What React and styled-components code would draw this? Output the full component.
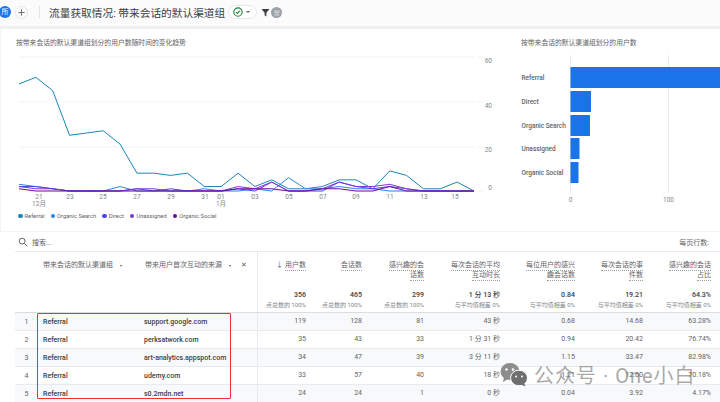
import React from 'react'
import styled, { createGlobalStyle } from 'styled-components'

const GlobalStyle = createGlobalStyle`
    html, body {
        margin: 0;
        background: #fff;
        overflow: hidden;
    }
    body {
        font-family: Roboto, "Noto Sans CJK SC", sans-serif;
        color: #3c4043;
    }
`

const COLUMNS = '23px 106px 113px 49px 56px 62px 76px 75px 68px 68px'

// y = 191 - value * 2.23, x = 18 + day index * 16.85
const SERIES = [
    { name: 'Referral', color: '#1a86b8', data: [48, 51, 45, 25, 26, 27, 21, 8, 8, 7, 8, 2, 2, 8, 2, 5, 1, 1, 2, 5, 5, 1, 9, 7, 1, 1, 4, 0] },
    { name: 'Organic Search', color: '#2a86e8', data: [3, 2, 1, 0, 0, 0, 2, 0, 0, 0, 0, 1, 0, 0, 1, 0, 6, 1, 1, 2, 1, 1, 0, 0, 0, 0, 0, 0] },
    { name: 'Direct', color: '#4a45ea', data: [2, 2, 1, 0, 0, 0, 0, 1, 0, 1, 0, 0, 0, 1, 0, 4, 0, 0, 0, 4, 2, 1, 2, 1, 0, 0, 0, 0] },
    { name: 'Unassigned', color: '#7d36d8', data: [2, 1, 1, 0, 0, 0, 0, 1, 1, 0, 0, 0, 0, 2, 1, 4, 0, 0, 1, 4, 2, 2, 3, 1, 0, 0, 0, 0] },
    { name: 'Organic Social', color: '#6f0a92', data: [1, 0, 0, 0, 0, 0, 0, 0, 0, 0, 0, 0, 0, 1, 1, 1, 0, 0, 1, 1, 0, 0, 2, 0, 0, 0, 0, 0] },
]

const DAY_TICKS = [
    { x: 38, label: '21', sub: '12月' },
    { x: 69, label: '23' },
    { x: 102, label: '25' },
    { x: 136, label: '27' },
    { x: 170, label: '29' },
    { x: 204, label: '31' },
    { x: 220, label: '01', sub: '1月' },
    { x: 254, label: '03' },
    { x: 288, label: '05' },
    { x: 322, label: '07' },
    { x: 355, label: '09' },
    { x: 389, label: '11' },
    { x: 423, label: '13' },
    { x: 454, label: '15' },
]

const BARS = [
    { label: 'Referral', y: 67, width: 160 },
    { label: 'Direct', y: 91, width: 20.5 },
    { label: 'Organic Search', y: 115, width: 19.5 },
    { label: 'Unassigned', y: 138, width: 9 },
    { label: 'Organic Social', y: 162, width: 8 },
]

const METRICS = [
    { title: ['用户数'], sorted: true, total: '356', sub: '点总数的 100%' },
    { title: ['会话数'], total: '465', sub: '点总数的 100%' },
    { title: ['感兴趣的会', '话数'], total: '299', sub: '点总数的 100%' },
    { title: ['每次会话的平均', '互动时长'], total: '1 分 13 秒', sub: '与平均值相差 0%' },
    { title: ['每位用户的感兴', '趣会话数'], total: '0.84', sub: '与平均值相差 0%' },
    { title: ['每次会话的事', '件数'], total: '19.21', sub: '与平均值相差 0%' },
    { title: ['感兴趣的会话', '占比'], total: '64.3%', sub: '与平均值相差 0%' },
]

const ROWS = [
    ['support.google.com', '119', '128', '81', '43 秒', '0.68', '14.68', '63.28%'],
    ['perksatwork.com', '35', '43', '33', '1 分 31 秒', '0.94', '20.42', '76.74%'],
    ['art-analytics.appspot.com', '34', '47', '39', '3 分 11 秒', '1.15', '33.47', '82.98%'],
    ['udemy.com', '33', '57', '40', '18 秒', '1.21', '12.60', '70.18%'],
    ['s0.2mdn.net', '24', '24', '1', '0 秒', '0.04', '3.92', '4.17%'],
]

function linePoints(data) {
    return data.map((v, i) => `${18 + i * 16.85},${191 - v * 2.23}`).join(' ')
}

function App() {
    return (
        <Page>
            <GlobalStyle />
            <Header>
                <Badge>所</Badge>
                <AddButton>
                    <svg width="13" height="13" viewBox="0 0 13 13" fill="none">
                        <circle cx="6.5" cy="6.5" r="6" stroke="#c4c7cb" strokeWidth="0.7" strokeDasharray="1 0.8" />
                        <path d="M6.5 3.4v6.2M3.4 6.5h6.2" stroke="#5f6368" strokeWidth="0.9" />
                    </svg>
                </AddButton>
                <Divider />
                <Title>流量获取情况: 带来会话的默认渠道组</Title>
                <StatusPill>
                    <svg width="10" height="10" viewBox="0 0 24 24" fill="none" stroke="#188038" strokeWidth="2.6">
                        <circle cx="12" cy="12" r="10" />
                        <path d="M7.5 12.5l3 3 6-6.5" />
                    </svg>
                    <Caret $large />
                </StatusPill>
                <svg width="9" height="9" viewBox="0 0 10 10">
                    <path d="M0.5 1h9L6 5.4V9.4L4 8V5.4z" fill="#3c4043" />
                </svg>
                <GreyBadge>智</GreyBadge>
            </Header>

            <ChartsRow>
                <div>
                    <ChartTitle>按带来会话的默认渠道组划分的用户数随时间的变化趋势</ChartTitle>
                    <ChartSvg width="500" height="160" viewBox="0 50 500 160">
                        {[57, 102, 147, 191].map((y) => (
                            <g key={y}>
                                <line x1="18" x2="473" y1={y} y2={y} stroke="#f1f3f4" />
                                <line x1="476" x2="482" y1={y} y2={y} stroke="#f1f3f4" />
                            </g>
                        ))}
                        {[['60', 63], ['40', 108], ['20', 152], ['0', 190]].map(([label, y]) => (
                            <AxisText key={label} x="491" y={y} textAnchor="end">{label}</AxisText>
                        ))}
                        {DAY_TICKS.map((t) => (
                            <g key={t.label}>
                                <AxisText x={t.x} y="199" textAnchor="middle">{t.label}</AxisText>
                                {t.sub && <AxisText x={t.x} y="205.5" textAnchor="middle">{t.sub}</AxisText>}
                            </g>
                        ))}
                        {SERIES.map((s) => (
                            <polyline key={s.name} points={linePoints(s.data)} fill="none" stroke={s.color} strokeWidth="1" />
                        ))}
                    </ChartSvg>
                    <Legend>
                        {SERIES.map((s) => (
                            <LegendItem key={s.name}>
                                <LegendDot $color={s.color} />
                                {s.name}
                            </LegendItem>
                        ))}
                    </Legend>
                </div>
                <div>
                    <BarTitle>按带来会话的默认渠道组划分的用户数</BarTitle>
                    <ChartSvg width="220" height="160" viewBox="500 50 220 160">
                        <line x1="569.5" x2="569.5" y1="55" y2="193" stroke="#e8eaed" />
                        <line x1="667.5" x2="667.5" y1="55" y2="193" stroke="#e8eaed" />
                        {BARS.map((b) => (
                            <g key={b.label}>
                                <BarLabel x="520.5" y={b.y + 13}>{b.label}</BarLabel>
                                <rect x="569.5" y={b.y} width={b.width} height="21" fill="#1a73e8" />
                            </g>
                        ))}
                        <AxisText x="569.5" y="202" textAnchor="middle">0</AxisText>
                        <AxisText x="667.5" y="202" textAnchor="middle">100</AxisText>
                    </ChartSvg>
                </div>
            </ChartsRow>

            <TableArea>
                <SearchBar>
                    <SearchLeft>
                        <svg width="10" height="10" viewBox="0 0 24 24" fill="none" stroke="#5f6368" strokeWidth="2.4">
                            <circle cx="10" cy="10" r="7" />
                            <path d="M15.5 15.5L22 22" />
                        </svg>
                        搜索...
                    </SearchLeft>
                    <PageSize>每页行数:</PageSize>
                </SearchBar>

                <HeadRow>
                    <span />
                    <DimHead>
                        带来会话的默认渠道组
                        <Caret />
                    </DimHead>
                    <DimHead $last>
                        带来用户首次互动的来源
                        <Caret />
                        <CloseMark>✕</CloseMark>
                    </DimHead>
                    {METRICS.map((m, i) => (
                        <MetricHead key={m.total} $first={i === 0}>
                            <MetricLabel>
                                {m.title.map((line) => (
                                    <LabelLine key={line}>
                                        {m.sorted && <SortArrow>↓</SortArrow>}
                                        <Dotted>{line}</Dotted>
                                    </LabelLine>
                                ))}
                            </MetricLabel>
                            <TotalValue>{m.total}</TotalValue>
                            <TotalSub>{m.sub}</TotalSub>
                        </MetricHead>
                    ))}
                </HeadRow>

                {ROWS.map(([source, ...values], i) => (
                    <Row key={source} $shaded={i % 2 === 0}>
                        <RowNumber>{i + 1}</RowNumber>
                        <DimCell $pad>Referral</DimCell>
                        <DimCell>{source}</DimCell>
                        {values.map((v, j) => (
                            <ValueCell key={j} $first={j === 0}>{v}</ValueCell>
                        ))}
                    </Row>
                ))}

                <Highlight />
            </TableArea>

            <Watermark>
                <svg width="28" height="25" viewBox="0 0 28 25">
                    <ellipse cx="10" cy="9.5" rx="9.5" ry="8.5" fill="#8d8d8d" />
                    <path d="M4 15l-1 5 5-3z" fill="#8d8d8d" />
                    <ellipse cx="19" cy="16" rx="8.5" ry="7.8" fill="#6f6f6f" stroke="#fff" strokeWidth="1" />
                    <path d="M24 21l1.5 3.5-4.5-2z" fill="#6f6f6f" />
                    <circle cx="6.5" cy="7.5" r="1.2" fill="#fff" />
                    <circle cx="13" cy="7.5" r="1.2" fill="#fff" />
                    <circle cx="16" cy="14.5" r="1" fill="#fff" />
                    <circle cx="22" cy="14.5" r="1" fill="#fff" />
                </svg>
                <WatermarkText>公众号 · One小白</WatermarkText>
            </Watermark>
        </Page>
    )
}

export default App

const Page = styled.div`
    position: relative;
    width: 720px;
    height: 402px;
    overflow: hidden;
    background: #fff;
`
const Header = styled.div`
    height: 24px;
    padding-bottom: 2px;
    display: flex;
    align-items: center;
    background: #fbfbfc;
    border-bottom: 3px solid #f0f1f2;
`
const Badge = styled.div`
    width: 12px;
    height: 12px;
    margin-left: -1px;
    border-radius: 50%;
    background: #1a73e8;
    color: #fff;
    font-size: 7px;
    line-height: 12px;
    text-align: center;
`
const AddButton = styled.div`
    height: 13px;
    margin-left: 4px;
    svg {
        display: block;
    }
`
const Divider = styled.div`
    width: 1px;
    height: 12px;
    margin: 0 9px 0 11px;
    background: #e3e5e8;
`
const Title = styled.div`
    font-size: 10.7px;
    color: #3c4043;
    white-space: nowrap;
`
const StatusPill = styled.div`
    width: 29px;
    height: 14px;
    margin: 0 4px 0 3px;
    display: flex;
    align-items: center;
    justify-content: space-between;
    box-sizing: border-box;
    padding: 0 6px 0 4px;
    background: #fff;
    border: 1px solid #e6e8ea;
    border-radius: 7px;
`
const Caret = styled.i`
    display: inline-block;
    width: 0;
    height: 0;
    border-left: ${(props) => (props.$large ? '2px' : '1.6px')} solid transparent;
    border-right: ${(props) => (props.$large ? '2px' : '1.6px')} solid transparent;
    border-top: ${(props) => (props.$large ? '2.4px' : '2px')} solid #5f6368;
`
const GreyBadge = styled.div`
    width: 11px;
    height: 11px;
    margin-left: 1px;
    border-radius: 50%;
    background: #9aa0a6;
    color: #e8eaed;
    font-size: 6px;
    line-height: 11px;
    text-align: center;
`
const ChartsRow = styled.div`
    height: 202px;
    display: grid;
    grid-template-columns: 500px 220px;
    border-bottom: 1px solid #f1f3f4;
    border-left: 1px solid #f1f3f4;
`
const ChartTitle = styled.div`
    height: 21px;
    padding-left: 15px;
    font-size: 6.8px;
    line-height: 28px;
    color: #5f6368;
`
const BarTitle = styled(ChartTitle)`
    padding-left: 20px;
`
const ChartSvg = styled.svg`
    display: block;
`
const AxisText = styled.text`
    font-size: 6.5px;
    fill: #80868b;
`
const BarLabel = styled.text`
    font-size: 6.5px;
    font-weight: 500;
    fill: #5f6368;
`
const Legend = styled.div`
    height: 12px;
    padding-left: 17px;
    display: flex;
    align-items: center;
    gap: 6px;
`
const LegendItem = styled.div`
    display: flex;
    align-items: center;
    gap: 2px;
    font-size: 5.8px;
    color: #5f6368;
`
const LegendDot = styled.i`
    width: 4.5px;
    height: 4.5px;
    border-radius: 50%;
    background: ${(props) => props.$color};
`
const TableArea = styled.div`
    position: relative;
    margin-left: 15px;
`
const SearchBar = styled.div`
    height: 19px;
    display: flex;
    align-items: center;
    justify-content: space-between;
    border-bottom: 1px solid #e8eaed;
    font-size: 7px;
    color: #5f6368;
`
const SearchLeft = styled.div`
    display: flex;
    align-items: center;
    gap: 4px;
    padding-left: 3px;
`
const PageSize = styled.div`
    padding-right: 11px;
`
const HeadRow = styled.div`
    height: 60px;
    display: grid;
    grid-template-columns: ${COLUMNS};
    border-bottom: 1px solid #dadce0;
`
const DimHead = styled.div`
    display: flex;
    align-items: flex-start;
    gap: 5px;
    padding: 9px 0 0 5px;
    font-size: 7px;
    line-height: 9px;
    color: #5f6368;
    white-space: nowrap;
    ${(props) => props.$last && 'padding-left: 1px;'}
    i {
        margin-top: 3.5px;
        margin-left: 2px;
    }
`
const CloseMark = styled.span`
    margin-left: 5px;
    font-size: 6.5px;
`
const MetricHead = styled.div`
    display: flex;
    flex-direction: column;
    align-items: flex-end;
    padding-top: 8px;
    ${(props) => props.$first && 'border-left: 1px solid #e8eaed;'}
`
const MetricLabel = styled.div`
    height: 30px;
    font-size: 7px;
    line-height: 10px;
    color: #5f6368;
    text-align: right;
`
const LabelLine = styled.div`
    white-space: nowrap;
`
const SortArrow = styled.span`
    margin-right: 2px;
`
const Dotted = styled.span`
    padding-bottom: 1px;
    border-bottom: 1px dotted #9aa0a6;
`
const TotalValue = styled.div`
    font-size: 7px;
    font-weight: 500;
    line-height: 10px;
    color: #3c4043;
`
const TotalSub = styled.div`
    font-size: 6px;
    line-height: 10px;
    color: #80868b;
`
const Row = styled.div`
    height: 17px;
    display: grid;
    grid-template-columns: ${COLUMNS};
    align-items: center;
    background: ${(props) => (props.$shaded ? '#f8f9fa' : '#fff')};
    border-bottom: 1px solid #e8eaed;
    font-size: 7px;
`
const RowNumber = styled.div`
    text-align: center;
    color: #5f6368;
`
const DimCell = styled.div`
    font-weight: 500;
    color: #3c4043;
    white-space: nowrap;
    ${(props) => props.$pad && 'padding-left: 5px;'}
`
const ValueCell = styled.div`
    height: 100%;
    line-height: 17px;
    text-align: right;
    color: #5f6368;
    ${(props) => props.$first && 'border-left: 1px solid #e8eaed;'}
`
const Highlight = styled.div`
    position: absolute;
    left: 22px;
    top: 81px;
    box-sizing: border-box;
    width: 194px;
    height: 86px;
    border: 1.5px solid #f03030;
    border-radius: 1px;
    pointer-events: none;
`
const Watermark = styled.div`
    position: absolute;
    left: 500px;
    top: 360px;
    display: flex;
    align-items: center;
    gap: 6px;
`
const WatermarkText = styled.span`
    font-size: 20px;
    letter-spacing: 1px;
    color: rgba(110, 110, 110, 0.6);
    white-space: nowrap;
`
